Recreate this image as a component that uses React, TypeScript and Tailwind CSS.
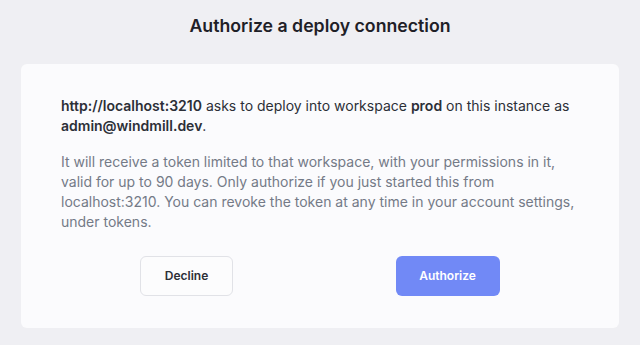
export default function App() {
  return (
    <div
      className="min-h-[345px] w-full bg-[#efeff3] px-[21px] pt-[14px]"
      style={{ fontFamily: 'Inter, "Noto Sans", sans-serif' }}
    >
      <h1 className="text-center text-[17.7px] font-semibold leading-6 text-[#1e2027]">
        Authorize a deploy connection
      </h1>

      <div className="mt-[26px] rounded-md bg-[#fbfbfd] px-10 pb-[32px] pt-[32px]">
        <p className="text-[14px] leading-5 text-[#2c2f37]">
          <span className="font-semibold">http://localhost:3210</span> asks to deploy into workspace{' '}
          <span className="font-semibold">prod</span> on this instance as{' '}
          <span className="font-semibold">admin@windmill.dev</span>.
        </p>

        <p className="mt-4 text-[14px] leading-5 text-[#747a87]">
          It will receive a token limited to that workspace, with your permissions in it, valid for up
          to 90 days. Only authorize if you just started this from localhost:3210. You can revoke the
          token at any time in your account settings, under tokens.
        </p>

        <div className="mt-6 grid grid-cols-2">
          <div className="flex justify-center pr-2">
            <button className="h-10 w-[93px] rounded-md border border-[#e1e2e7] bg-[#fcfcfd] text-[12px] font-semibold text-[#2c2f37]">
              Decline
            </button>
          </div>
          <div className="flex justify-center pr-1">
            <button className="h-10 w-[104px] rounded-md bg-[#7189f6] text-[12px] font-semibold text-white">
              Authorize
            </button>
          </div>
        </div>
      </div>
    </div>
  )
}
